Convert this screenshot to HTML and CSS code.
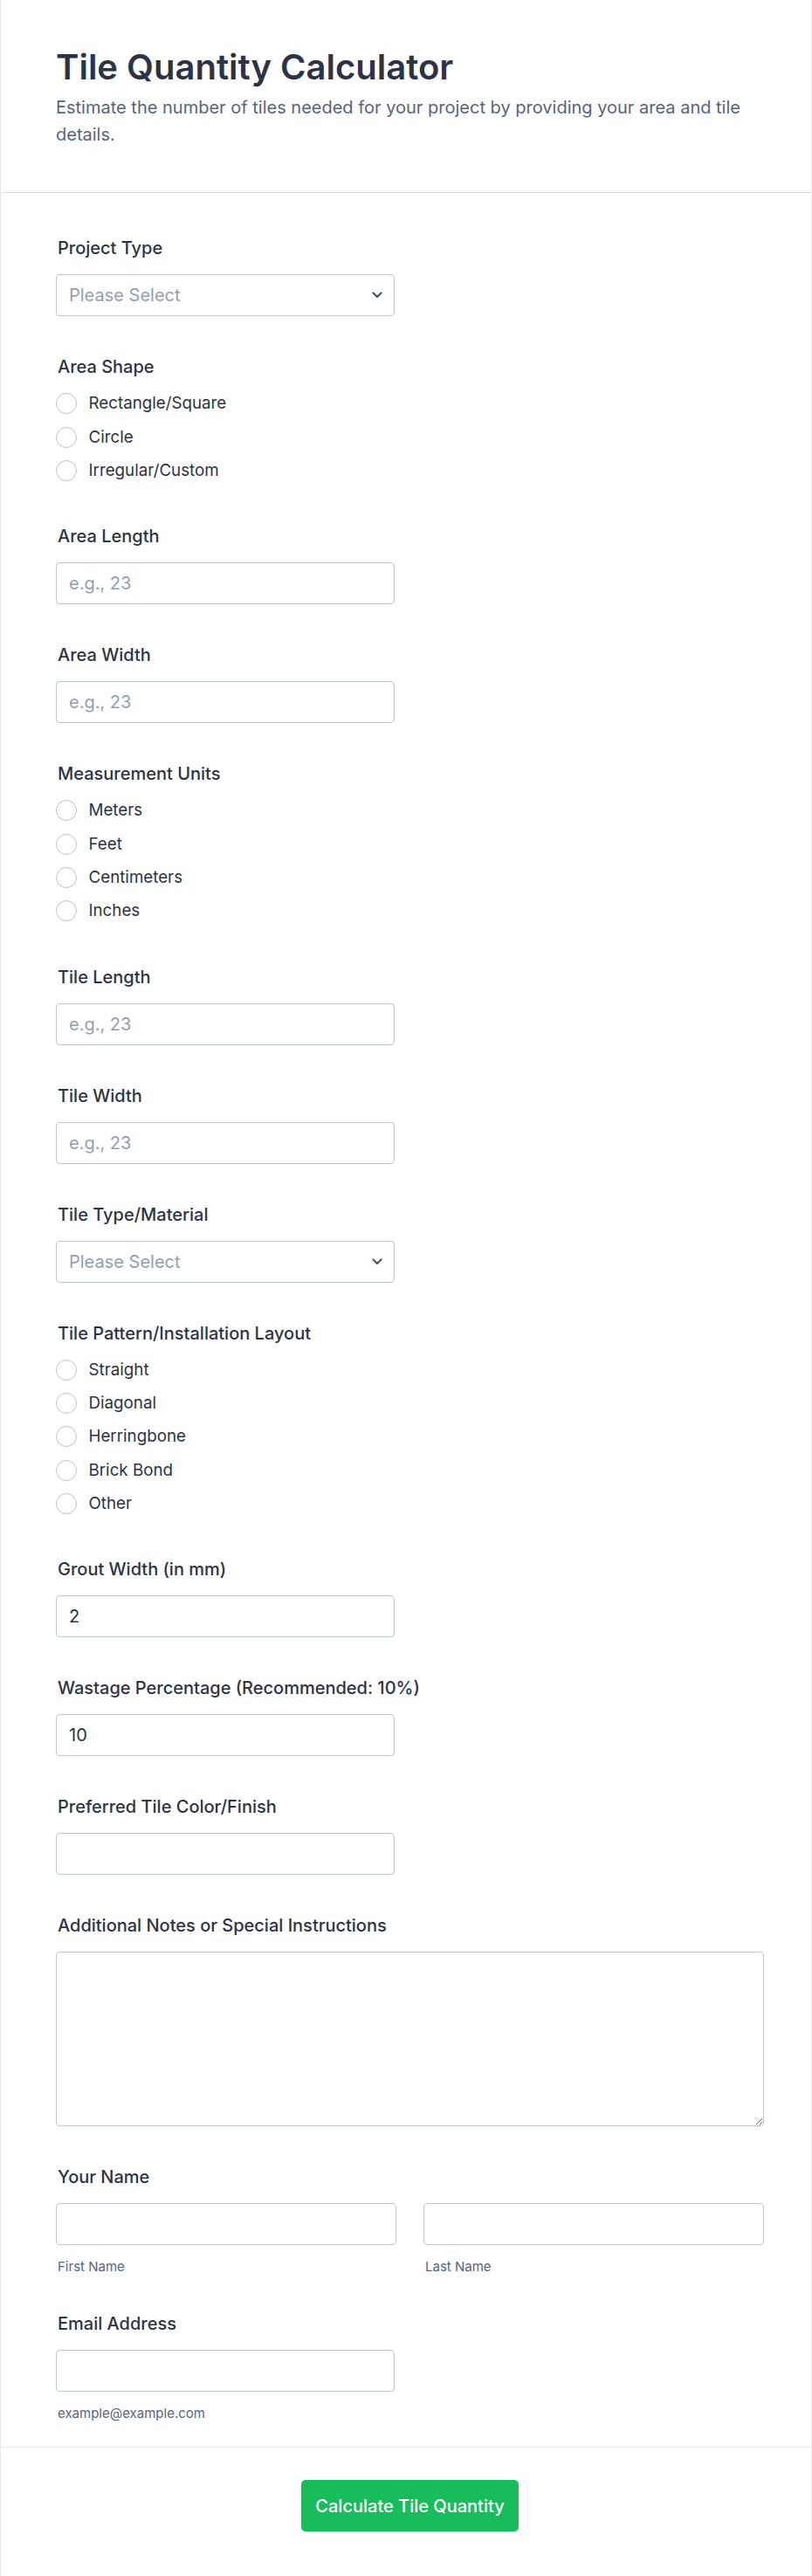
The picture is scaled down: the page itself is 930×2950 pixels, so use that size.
FILE: index.html
```html
<!DOCTYPE html>
<html lang="en">
<head>
<meta charset="utf-8">
<title>Tile Quantity Calculator</title>
<link rel="stylesheet" href="styles.css">
</head>
<body>
<div class="card">
  <header class="head">
    <h1 class="title">Tile Quantity Calculator</h1>
    <p class="subtitle">Estimate the number of tiles needed for your project by providing your area and tile details.</p>
  </header>

  <form class="fields">
    <div class="field">
      <label class="lbl">Project Type</label>
      <div class="select-wrap">
        <select class="ctrl select"><option>Please Select</option></select>
        <svg class="chev" width="12" height="8" viewBox="0 0 12 8"><path d="M1.5 1.5 L6 6 L10.5 1.5" fill="none" stroke="#4a5568" stroke-width="2.2" stroke-linecap="round" stroke-linejoin="round"/></svg>
      </div>
    </div>

    <div class="field radio-field">
      <label class="lbl">Area Shape</label>
      <div class="radios">
        <label class="opt"><input type="radio" name="shape"><span>Rectangle/Square</span></label>
        <label class="opt"><input type="radio" name="shape"><span>Circle</span></label>
        <label class="opt"><input type="radio" name="shape"><span>Irregular/Custom</span></label>
      </div>
    </div>

    <div class="field">
      <label class="lbl">Area Length</label>
      <input class="ctrl" type="text" placeholder="e.g., 23">
    </div>

    <div class="field">
      <label class="lbl">Area Width</label>
      <input class="ctrl" type="text" placeholder="e.g., 23">
    </div>

    <div class="field radio-field">
      <label class="lbl">Measurement Units</label>
      <div class="radios">
        <label class="opt"><input type="radio" name="units"><span>Meters</span></label>
        <label class="opt"><input type="radio" name="units"><span>Feet</span></label>
        <label class="opt"><input type="radio" name="units"><span>Centimeters</span></label>
        <label class="opt"><input type="radio" name="units"><span>Inches</span></label>
      </div>
    </div>

    <div class="field">
      <label class="lbl">Tile Length</label>
      <input class="ctrl" type="text" placeholder="e.g., 23">
    </div>

    <div class="field">
      <label class="lbl">Tile Width</label>
      <input class="ctrl" type="text" placeholder="e.g., 23">
    </div>

    <div class="field">
      <label class="lbl">Tile Type/Material</label>
      <div class="select-wrap">
        <select class="ctrl select"><option>Please Select</option></select>
        <svg class="chev" width="12" height="8" viewBox="0 0 12 8"><path d="M1.5 1.5 L6 6 L10.5 1.5" fill="none" stroke="#4a5568" stroke-width="2.2" stroke-linecap="round" stroke-linejoin="round"/></svg>
      </div>
    </div>

    <div class="field radio-field">
      <label class="lbl">Tile Pattern/Installation Layout</label>
      <div class="radios">
        <label class="opt"><input type="radio" name="pattern"><span>Straight</span></label>
        <label class="opt"><input type="radio" name="pattern"><span>Diagonal</span></label>
        <label class="opt"><input type="radio" name="pattern"><span>Herringbone</span></label>
        <label class="opt"><input type="radio" name="pattern"><span>Brick Bond</span></label>
        <label class="opt"><input type="radio" name="pattern"><span>Other</span></label>
      </div>
    </div>

    <div class="field">
      <label class="lbl">Grout Width (in mm)</label>
      <input class="ctrl" type="text" value="2">
    </div>

    <div class="field">
      <label class="lbl">Wastage Percentage (Recommended: 10%)</label>
      <input class="ctrl" type="text" value="10">
    </div>

    <div class="field">
      <label class="lbl">Preferred Tile Color/Finish</label>
      <input class="ctrl" type="text">
    </div>

    <div class="field">
      <label class="lbl">Additional Notes or Special Instructions</label>
      <textarea class="ctrl area"></textarea>
    </div>

    <div class="field">
      <label class="lbl">Your Name</label>
      <div class="name-row">
        <div class="name-col">
          <input class="ctrl wide" type="text">
          <span class="help">First Name</span>
        </div>
        <div class="name-col">
          <input class="ctrl wide" type="text">
          <span class="help">Last Name</span>
        </div>
      </div>
    </div>

    <div class="field">
      <label class="lbl">Email Address</label>
      <input class="ctrl" type="text">
      <span class="help">example@example.com</span>
    </div>
  </form>

  <div class="foot">
    <button class="submit" type="button">Calculate Tile Quantity</button>
  </div>
</div>
</body>
</html>
```

FILE: styles.css
```css
* { box-sizing: border-box; }

html, body {
  margin: 0;
  padding: 0;
  background: #ffffff;
}

body {
  font-family: Inter, "Noto Sans", "Liberation Sans", sans-serif;
  color: #2c3345;
}

.card {
  width: 930px;
  background: #ffffff;
  border-left: 1px solid #e6e8ee;
  border-right: 1px solid #e6e8ee;
}

.head {
  padding: 53px 54px 51px 63px;
  border-bottom: 1px solid #dcdee7;
}

.title {
  margin: 0;
  font-size: 40px;
  line-height: 48px;
  font-weight: 600;
  color: #2c3345;
}

.subtitle {
  margin: 7px 0 0 0;
  font-size: 20px;
  line-height: 30.67px;
  font-weight: 400;
  color: #57647e;
}

.fields {
  display: flex;
  flex-direction: column;
  gap: 46px;
  padding: 51px 54px 31px 63px;
  margin: 0;
}

.field {
  display: flex;
  flex-direction: column;
  align-items: flex-start;
}

.radio-field {
  padding-bottom: 5.4px;
}

.lbl {
  display: block;
  font-size: 20px;
  line-height: 24px;
  font-weight: 500;
  color: #2c3345;
  margin-bottom: 18px;
  padding-left: 2px;
}

.ctrl {
  display: block;
  width: 388px;
  height: 48px;
  margin: 0;
  padding: 0 14px;
  border: 1px solid #c0c5d3;
  border-radius: 4px;
  background: #ffffff;
  font-family: Inter, "Noto Sans", "Liberation Sans", sans-serif;
  font-size: 20px;
  color: #2c3345;
  outline: none;
}

.ctrl::placeholder {
  color: #949eb3;
  opacity: 1;
}

.select-wrap {
  position: relative;
  width: 388px;
}

.select {
  -webkit-appearance: none;
  appearance: none;
  color: #949eb3;
}

.chev {
  position: absolute;
  right: 14px;
  top: 20px;
  pointer-events: none;
}

.radios {
  display: flex;
  flex-direction: column;
  gap: 14.33px;
}

.opt {
  display: flex;
  align-items: center;
  height: 24px;
  gap: 13.5px;
  font-size: 18.75px;
  line-height: 24px;
  color: #2c3345;
}

.opt input {
  -webkit-appearance: none;
  appearance: none;
  width: 24px;
  height: 24px;
  margin: 0;
  border: 1px solid #bcc1ce;
  border-radius: 50%;
  background: #ffffff;
  flex: none;
}

.area {
  width: 100%;
  height: 200px;
  padding: 12px 14px;
  resize: vertical;
}

.name-row {
  display: grid;
  grid-template-columns: 1fr 1fr;
  column-gap: 31px;
  width: 100%;
}

.name-col {
  display: flex;
  flex-direction: column;
}

.wide {
  width: 100%;
}

.help {
  display: block;
  margin-top: 17px;
  padding-left: 2px;
  font-size: 15px;
  line-height: 15px;
  color: #57647e;
}

.foot {
  border-top: 1px solid #e9ebf1;
  padding: 37px 54px 51px 63px;
  display: flex;
  justify-content: center;
}

.submit {
  height: 59px;
  padding: 0 16px;
  border: none;
  border-radius: 5px;
  background: #18bd5b;
  color: #ffffff;
  font-family: Inter, "Noto Sans", "Liberation Sans", sans-serif;
  font-size: 20px;
  font-weight: 500;
}
```
